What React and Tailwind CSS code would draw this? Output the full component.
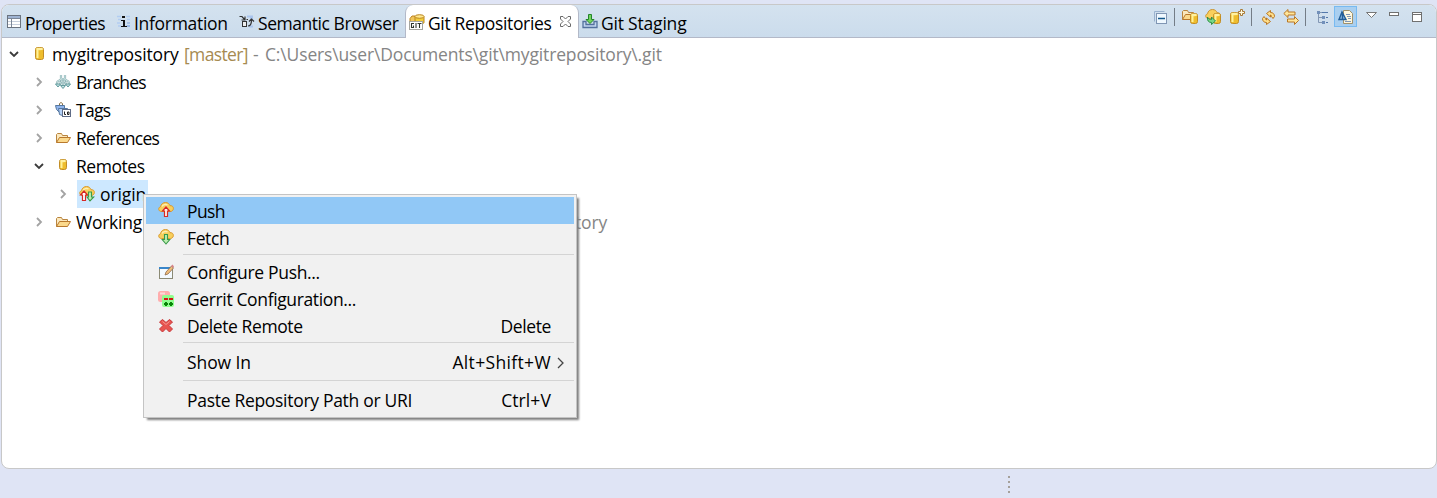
import React from "react";

function Icon({ w = 16, children }) {
  return (
    <svg className="block shrink-0" width={w} height="16" viewBox={`0 0 ${w} 16`} fill="none">
      {children}
    </svg>
  );
}

function TableIcon() {
  return (
    <Icon>
      <rect x="1.5" y="1.5" width="13" height="12" fill="#fff" stroke="#6b7480" />
      <path d="M2 3h12" stroke="#9eb3d2" strokeWidth="2" />
      <path d="M2 4.5h12M5.500 4v9" stroke="#7c8797" />
      <path d="M6 7.500h8M6 10.500h8M2 7.500h3M2 10.500h3" stroke="#c6cfdc" />
    </Icon>
  );
}

function InfoIcon() {
  return (
    <Icon>
      <path d="M1 2.500h4M2 5.500h3M1 9h3M2 12h3M10 2.500h4M11 5.500h3M10 12h4" stroke="#b2cdf2" strokeWidth="1.500" />
      <path d="M11 9h3M11 12h3" stroke="#7fa4de" />
      <rect x="6" y="2" width="3" height="2" fill="#111" />
      <path d="M5 6.500h3M5 12.500h6" stroke="#111" />
      <path d="M8 6v6.500" stroke="#111" strokeWidth="2" />
    </Icon>
  );
}

function SemanticIcon() {
  return (
    <Icon>
      <path d="M8 2.500h6M11 4.500h3M10 12.500h4" stroke="#a9c4ed" strokeWidth="2" />
      <path d="M.5 2.500h2.500l2.500 3M2.500 6h3.500V2.500" stroke="#333" strokeWidth="1.200" />
      <rect x="3.500" y="7.500" width="4" height="5" fill="#eee" stroke="#333" />
      <path d="M9 12c2 0 3.500-2 3.500-6M10 7.500 12.500 5 15 7.500M9 5.500H7.500" stroke="#333" strokeWidth="1.200" />
    </Icon>
  );
}

function GitIcon() {
  return (
    <Icon>
      <path d="M1 4.500 3 2h3l1 2h5v5H1z" fill="#f0c55a" stroke="#bd8323" />
      <path d="M6 2.500v6c0 2 9 2 9 0v-6" fill="#f3ce39" stroke="#b98420" />
      <ellipse cx="10.500" cy="2.500" rx="4.500" ry="1.800" fill="#ffe991" stroke="#b98420" />
      <rect x=".5" y="7.500" width="13" height="8" fill="#fff" stroke="#a5a59f" />
      <path d="M5 9.500H2.500v4h2v-2M7 9v5M8.500 9.500h4M10.500 9.500v4.500" stroke="#30362c" strokeWidth="1.100" />
    </Icon>
  );
}

function StagingIcon() {
  return (
    <Icon>
      <path d="M1 7.500h3v3h8v-3h3v6H1z" fill="#c1d5ef" stroke="#53709d" strokeWidth="1.300" />
      <path d="M6.500.500h3v5h2.500L8 9.500 4 5.500h2.500z" fill="#72d45b" stroke="#23852b" />
    </Icon>
  );
}

function CloseIcon() {
  return (
    <svg className="block shrink-0" width="11" height="11" viewBox="0 0 11 11" fill="none">
      <path d="M.5.500h2.500l2.500 2.500L8 .500h2.500V3L8 5.500 10.500 8v2.500H8L5.500 8 3 10.500H.5V8L3 5.500.5 3z" fill="#fff" stroke="#6a6a6a" />
    </svg>
  );
}

function Cylinder({ x = 3, y = 2, w = 8, h = 12 }) {
  return (
    <g>
      <rect x={x + 0.5} y={y + 0.5} width={w} height={h} rx="2" fill="#eebd2d" stroke="#c28d25" />
      <path d={`M${x + 2.5} ${y + 3}v${h - 4}`} stroke="#fff29a" strokeWidth="2" />
      <ellipse cx={x + w / 2 + 0.5} cy={y + 2} rx={w / 2 - 0.5} ry="1.2" fill="#fff1a0" />
    </g>
  );
}

function FolderShape() {
  return (
    <g>
      <path d="M1.500 12.500v-8l1-1h4l1 2h5v3" fill="#fbe8bd" stroke="#b9853f" />
      <path d="m1.500 12.500 3-5h11l-3 5z" fill="#fbd98c" stroke="#b9792d" strokeLinejoin="round" />
    </g>
  );
}

const CLOUD = "M3.500 9.500C.2 9.500-.2 5.500 2.500 4.800 3 2 5 .500 7.500.500c2.500 0 4 1.500 4.500 3.200 3.500-.5 4.500 3.500 2 5.300-.8.700-2 .5-3 .5z";

function CloudIcon({ kind }) {
  return (
    <Icon>
      <path d={CLOUD} fill="#f8cf5c" stroke="#d9992e" />
      <path d="M4 4.500C5 2.500 8 2 9.500 3" stroke="#ffeeb1" strokeWidth="1.500" />
      {kind === "push" && <path d="m8 5 3.500 4H9.500v5.500h-3V9h-2z" fill="#fff3ed" stroke="#d62926" strokeWidth="1.200" />}
      {kind === "fetch" && <path d="M6.500 5.500h3v5h2.300L8 15 4.200 10.500h2.300z" fill="#bdeeb0" stroke="#3a9a4a" strokeWidth="1.100" />}
      {kind === "both" && (
        <g>
          <path d="m5 5 3.500 4H6.500v5.500h-3V9h-2z" fill="#fff" stroke="#d62926" strokeWidth="1.200" />
          <path d="M9.500 6h3v5h2.300L11 15l-3-4h1.500z" fill="#bdeeb0" stroke="#3a9a4a" strokeWidth="1.100" />
        </g>
      )}
    </Icon>
  );
}

const BRANCH_LINES = "M6 1v4c0 2-4 1-4 4v2M10 1v4c0 2 4 1 4 4v2M7 4v2c0 2-2 2-2 5M9 4v2c0 2 2 2 2 5M8 8v4";

function BranchesIcon() {
  return (
    <Icon>
      <path d={BRANCH_LINES} stroke="#86aeb1" strokeWidth="2.200" />
      <path d={BRANCH_LINES} stroke="#e2f4f3" strokeWidth=".8" />
      <path d="M.5 10h5L3 13zM10.500 10h5L13 13zM5.500 11.500h5L8 14.500z" fill="#c0e5e4" stroke="#649a9d" />
    </Icon>
  );
}

function TagsIcon() {
  return (
    <Icon>
      <path d="M4.500 3V1.500L6 .500l1.500 1V3" stroke="#8a7044" />
      <path d="M.5 3.500h9v3h-5v4l-3-3z" fill="#8fb4ec" stroke="#55779f" />
      <path d="M3.500 6.500h9v2h-5v5l-3-1z" fill="#b5d2f8" stroke="#55779f" />
      <rect x="7.500" y="7.500" width="8" height="7" fill="#fff" stroke="#5f6c87" />
      <path d="M9.500 9.500v3H11M12.500 10h1.500v2.500h-1.500z" stroke="#222" />
    </Icon>
  );
}

function ConfigureIcon() {
  return (
    <Icon>
      <rect x="1.500" y="3.500" width="13" height="11" fill="#f4faff" stroke="#8b8a75" />
      <path d="M1 4h12" stroke="#3986ca" strokeWidth="2" />
      <path d="m7 11 1-3 5.500-6 2 2L10 10z" fill="#efbd7a" stroke="#8f6d51" strokeWidth=".8" />
      <path d="m13 2 1.500-1.500 1.500 2L15 4z" fill="#d78388" />
    </Icon>
  );
}

function GerritIcon() {
  return (
    <Icon>
      <rect x="0" y="0" width="12" height="11" rx="2.500" fill="#ffadad" />
      <rect x="2" y="1.500" width="5" height="2" fill="#ffd7d7" />
      <rect x="4" y="4" width="12" height="12" rx="2" fill="#8fff8f" />
      <path d="M6 8h4M11 8h4" stroke="#d01616" strokeWidth="2" />
      <path d="M6 13h4M8 11v4M11 13h4M13 11v4" stroke="#078407" strokeWidth="2" />
    </Icon>
  );
}

function DeleteIcon() {
  return (
    <Icon>
      <path d="m4.500 1.500 3.500 3 3.500-3 3 2.500-3.500 3.500 3.500 3.500-3 3L8 10.500 4.500 14l-3-3L5 7.500 1.500 4z" fill="#e85450" stroke="#c9393b" strokeLinejoin="round" />
      <path d="M4.500 3.500 8 6.500l3.500-3" stroke="#f59a91" />
    </Icon>
  );
}

function Chevron({ open }) {
  return (
    <svg className="block shrink-0" width="12" height="12" viewBox="0 0 12 12" fill="none">
      {open ? <path d="m2 4 4 4 4-4" stroke="#3b3b3b" strokeWidth="1.800" /> : <path d="m4 2 4 4-4 4" stroke="#a3a3a3" strokeWidth="1.800" />}
    </svg>
  );
}

function Tab({ icon, label, className }) {
  return (
    <div className={`flex h-full shrink-0 items-center pt-1 ${className}`}>
      <div className="pb-0.5">{icon}</div>
      <span>{label}</span>
    </div>
  );
}

function TreeRow({ open, indent, icon, children }) {
  return (
    <div className={`flex h-7 items-center whitespace-nowrap pb-px ${indent}`}>
      <Chevron open={open} />
      <div className="ml-[10px]">{icon}</div>
      {children}
    </div>
  );
}

function MenuItem({ icon, label, keys, tracking, keyTracking = "", active, submenu, shift = "pb-px" }) {
  return (
    <div className={`flex h-[27px] items-center ${active ? "bg-[#91c8f6]" : ""}`}>
      <div className="ml-3 w-[29px] pb-[2px]">{icon}</div>
      <span className={`${shift} ${tracking}`}>{label}</span>
      <span className={`ml-auto pb-px ${keyTracking}`}>{keys}</span>
      <div className="flex w-[23px] justify-start pl-[5px]">
        {submenu && (
          <svg width="9" height="12" viewBox="0 0 9 12" fill="none">
            <path d="m2 1 5 5-5 5" stroke="#444" strokeWidth="1.300" />
          </svg>
        )}
      </div>
    </div>
  );
}

function ToolSeparator({ className }) {
  return <div className={`h-[18px] w-px shrink-0 bg-[#747d87] ${className}`} />;
}

function Toolbar() {
  return (
    <div className="ml-auto flex h-full items-start pt-1">
      <Icon>
        <path d="M2.500 12.500v-10h10" stroke="#9ab2cf" />
        <rect x="4.500" y="4.500" width="10" height="10" fill="#eff8ff" stroke="#8096b4" />
        <path d="M6 9.500h7" stroke="#14578c" strokeWidth="1.500" />
      </Icon>
      <ToolSeparator className="ml-[6px] mt-[-1px]" />
      <div className="ml-[7px]"><Icon w="17"><g transform="translate(-1 -2)"><FolderShape /></g><Cylinder x={8} y={4} w={7} h={10} /></Icon></div>
      <div className="ml-[6px]"><Icon w="17"><path d={CLOUD} fill="#f8cf5c" stroke="#c99236" /><Cylinder x={8} y={4} w={7} h={10} /><path d="M2.500 8c1 2.500 2.500 2.500 4 2.500V8l4 4-4 3.500v-2c-3 0-4.500-2-4-5.500z" fill="#78d886" stroke="#308e46" /></Icon></div>
      <div className="ml-[7px]"><Icon w="17"><Cylinder x={1} y={3} w={8} h={11} /><path d="M11.500.500h2v2h2v2h-2v2h-2v-2h-2v-2h2z" fill="#fffbe0" stroke="#a87935" /></Icon></div>
      <ToolSeparator className="ml-[5px] mt-[-1px]" />
      <div className="ml-[9px] mt-px">
        <Icon>
          <path d="m5.500 3.500 4-3v2c2.500 0 4 1.500 4 4l-1.500 2-1.500-2c0-1-.5-1.500-1-1.500v2z" fill="#ffe08a" stroke="#b97724" />
          <path d="m9.500 11.500-4 3v-2c-2.500 0-4-1.500-4-4L3 6.500l1.500 2c0 1 .5 1.500 1 1.500V8z" fill="#ffe08a" stroke="#b97724" />
        </Icon>
      </div>
      <div className="ml-[6px]">
        <Icon w="17">
          <path d="M5 .500v2.500h7v3H5v2.500L.8 4.500z" fill="#ffe69a" stroke="#b97724" />
          <path d="M11.500 7.500V10h-7v3h7v2.500l4-4z" fill="#ffe69a" stroke="#b97724" />
        </Icon>
      </div>
      <ToolSeparator className="ml-[5px] mt-[-1px]" />
      <div className="ml-[9px]">
        <Icon>
          <path d="M3.500 3v10.500H7M3.500 8.500H7M4 3.500h3" stroke="#8297b4" />
          <path d="M2 2h3v3H2zM7 7h3v3H7zM7 12h3v3H7z" fill="#7290ba" />
          <path d="M7 3.500h6M11 8.500h2M11 13.500h2" stroke="#5378ab" />
        </Icon>
      </div>
      <div className="ml-[3px] mt-[-3px] flex h-[21px] w-[23px] items-center justify-center border border-[#78baf1] bg-[#a9cff0]">
        <Icon>
          <path d="M5.500 1.500h6l3 3v10h-9z" fill="#fff8df" stroke="#a1916b" />
          <path d="M8 5.500h4M9 7.500h4M10 9.500h3M7 12.500h6" stroke="#8097b5" />
          <path d="M1 10.500 4 3l4 7.500zM4.500 5v5" fill="#8bb9df" stroke="#235e97" strokeWidth="1.400" />
        </Icon>
      </div>
      <svg className="ml-2 mt-[2px]" width="13" height="8" viewBox="0 0 13 8"><path d="M1.500 1.500h10L6.500 6.500z" fill="#fff" stroke="#777" /></svg>
      <div className="ml-[11px] mt-[3px] h-1 w-[10px] border border-[#707070] bg-white" />
      <div className="ml-[13px] mr-[14px] mt-[3px] h-[10px] w-[10px] border border-[#707070] bg-white pt-px"><div className="h-px bg-[#707070]" /></div>
    </div>
  );
}

export default function App() {
  return (
    <div className="relative flex h-[498px] w-[1437px] flex-col overflow-hidden bg-[#dfe4f5] pl-px pt-1 font-['Open_Sans','Noto_Sans',sans-serif] text-[17.5px] leading-6 text-black">
      <div className="flex h-[465px] flex-col overflow-hidden rounded-lg border border-[#c8c8c8] bg-white">
        <div className="flex h-[33px] shrink-0 border-b border-[#b3b9c8] bg-linear-to-b from-[#d4e2ef] to-[#cbdcec] whitespace-nowrap">
          <Tab className="w-[110px] gap-[3px] pl-1 tracking-[-0.45px]" icon={<TableIcon />} label="Properties" />
          <Tab className="w-[124px] gap-[2px] pl-[4px] tracking-[-0.3px]" icon={<InfoIcon />} label="Information" />
          <Tab className="w-[169px] gap-[3px] pl-[3px] tracking-[-0.45px]" icon={<SemanticIcon />} label="Semantic Browser" />
          <div className="flex h-[33px] w-[174px] shrink-0 items-center rounded-t-lg border-x border-[#b3b9c8] bg-white pl-[3px] pt-[3px]">
            <div className="pb-0.5"><GitIcon /></div>
            <span className="ml-[3px] w-[132px] tracking-[-0.35px]">Git Repositories</span>
            <div className="pb-1"><CloseIcon /></div>
          </div>
          <Tab className="gap-[3px] pl-[3px] tracking-[-0.2px]" icon={<StagingIcon />} label="Git Staging" />
          <Toolbar />
        </div>
        <div className="flex flex-col pt-[2px]">
          <TreeRow open indent="pl-[6px]" icon={<Icon><Cylinder x={5} y={1} w={8} h={12} /></Icon>}>
            <span className="ml-[6px] w-[132px] tracking-[-0.15px]">mygitrepository</span>
            <span className="w-[69px] tracking-[-0.65px] text-[#a68a51]">[master]</span>
            <span className="w-[12px] text-[#858585]">-</span>
            <span className="tracking-[-0.15px] text-[#858585]">C:\Users\user\Documents\git\mygitrepository\.git</span>
          </TreeRow>
          <TreeRow indent="pl-[31px]" icon={<BranchesIcon />}><span className="ml-[5px] tracking-[-0.8px]">Branches</span></TreeRow>
          <TreeRow indent="pl-[31px]" icon={<TagsIcon />}><span className="ml-[5px] tracking-[-0.7px]">Tags</span></TreeRow>
          <TreeRow indent="pl-[31px]" icon={<Icon><FolderShape /></Icon>}><span className="ml-[5px] tracking-[-0.75px]">References</span></TreeRow>
          <TreeRow open indent="pl-[31px]" icon={<Icon><Cylinder x={4} y={1} w={7} h={10} /></Icon>}><span className="ml-[5px] tracking-[-0.45px]">Remotes</span></TreeRow>
          <div className="flex h-7 items-center pl-[55px]">
            <Chevron />
            <div className="ml-[8px] flex h-7 w-[71px] items-center bg-[#cde8ff] pb-px pl-[2px]">
              <CloudIcon kind="both" />
              <span className="ml-[5px] tracking-[-0.1px]">origin</span>
            </div>
          </div>
          <TreeRow indent="pl-[31px]" icon={<Icon><FolderShape /></Icon>}>
            <span className="ml-[5px] tracking-[-0.25px]">Working</span>
            <span className="ml-[433px] tracking-[-0.15px] text-[#858585]">tory</span>
          </TreeRow>
        </div>
      </div>
      <div className="absolute left-[143px] top-[194px] h-[224px] w-[434px] border border-[#c4c4c4] bg-[#f1f1f1] p-[2px] whitespace-nowrap shadow-[3px_3px_2px_-1px_#808080]">
        <MenuItem active icon={<CloudIcon kind="push" />} label="Push" tracking="tracking-[-0.6px]" shift="pt-px" />
        <MenuItem icon={<CloudIcon kind="fetch" />} label="Fetch" tracking="tracking-[-0.4px]" shift="pt-px" />
        <div className="ml-[37px] h-2 pt-[3px]"><div className="h-px bg-[#d4d4d4]" /></div>
        <MenuItem icon={<ConfigureIcon />} label="Configure Push..." tracking="tracking-[-0.33px]" />
        <MenuItem icon={<GerritIcon />} label="Gerrit Configuration..." tracking="tracking-[-0.37px]" />
        <MenuItem icon={<DeleteIcon />} label="Delete Remote" keys="Delete" tracking="tracking-[-0.4px]" keyTracking="tracking-[-0.4px]" />
        <div className="ml-[37px] h-[9px] pt-[2px]"><div className="h-px bg-[#d4d4d4]" /></div>
        <MenuItem label="Show In" keys="Alt+Shift+W" submenu tracking="tracking-[-0.1px]" keyTracking="tracking-[0.35px]" />
        <div className="ml-[37px] h-[11px] pt-1"><div className="h-px bg-[#d4d4d4]" /></div>
        <MenuItem label="Paste Repository Path or URI" keys="Ctrl+V" tracking="tracking-[-0.3px]" keyTracking="tracking-[0.1px]" />
      </div>
      <div className="ml-[1007px] mt-[7px] flex flex-col gap-[3px]">
        <div className="h-0.5 w-0.5 bg-[#a5a09a]" />
        <div className="h-0.5 w-0.5 bg-[#a5a09a]" />
        <div className="h-0.5 w-0.5 bg-[#a5a09a]" />
        <div className="h-0.5 w-0.5 bg-[#a5a09a]" />
      </div>
    </div>
  );
}
